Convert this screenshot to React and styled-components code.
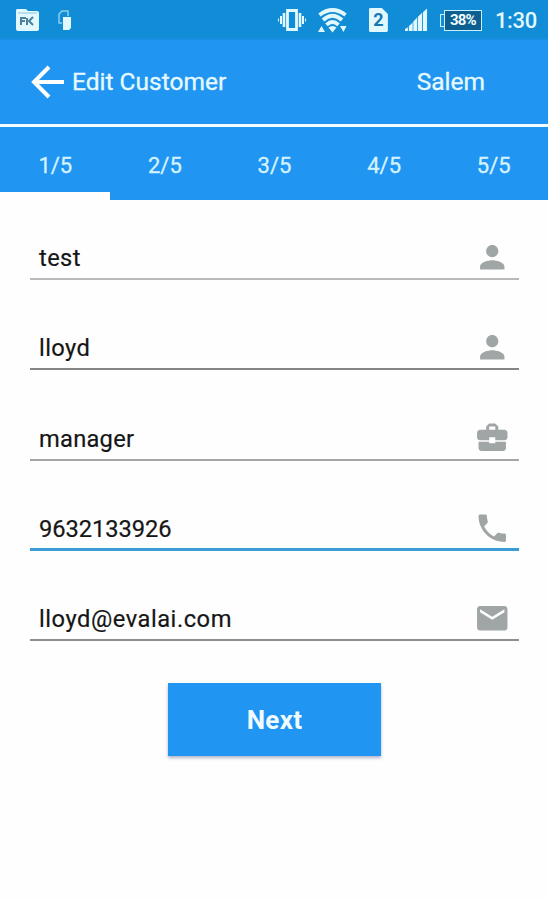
import React from 'react';
import styled, { createGlobalStyle } from 'styled-components';
import { MdPerson, MdBusinessCenter, MdPhone, MdEmail } from 'react-icons/md';

const GlobalStyle = createGlobalStyle`
  * { box-sizing: border-box; }
  body { margin: 0; background: #fefefe; font-family: Roboto, sans-serif; }
`;

const Screen = styled.main`
  width: 548px;
  height: 900px;
  overflow: hidden;
  background: #fefefe;
`;

const StatusBar = styled.div`
  display: flex;
  align-items: center;
  height: 40px;
  padding: 0 11px 0 16px;
  background: linear-gradient(#118cd6 0 37px, #1c91e8 40px);
  color: #e2f8ff;
`;

const StatusGroup = styled.div`
  display: flex;
  align-items: center;
  height: 40px;
`;

const StatusIcon = styled.svg`
  display: block;
  flex: none;
  margin-left: ${(p) => p.$gap || 0}px;
  fill: currentColor;
`;

const SimBadge = styled.span`
  display: flex;
  align-items: center;
  justify-content: center;
  width: 19px;
  height: 24px;
  margin-left: 22px;
  background: #e2f8ff;
  clip-path: polygon(0 1px, 1px 0, 13px 0, 19px 6px, 19px 23px, 18px 24px, 1px 24px, 0 23px);
  color: #1577b4;
  font-size: 18px;
  font-weight: 700;
  line-height: 24px;
`;

const BatteryCap = styled.span`
  width: 4px;
  height: 13px;
  margin-left: 12px;
  border: 1.5px solid #c8f0fa;
  border-right: 0;
`;

const Battery = styled.span`
  width: 38px;
  height: 21px;
  border: 1.5px solid #c8f0fa;
  background: #0e5f91;
  color: #f0fcff;
  font-size: 15px;
  font-weight: 700;
  letter-spacing: -0.8px;
  line-height: 19px;
  text-align: center;
`;

const Clock = styled.span`
  margin-left: 13px;
  font-size: 22px;
  font-weight: 500;
  line-height: 40px;
  padding-top: 1px;
  letter-spacing: -0.3px;
`;

const Spacer = styled.div`
  flex: 1;
`;

const Header = styled.header`
  display: flex;
  align-items: center;
  height: 87px;
  padding: 0 63px 0 31px;
  border-bottom: 3px solid #f4fcff;
  background: #2095f2;
  color: #e6faff;
  -webkit-text-stroke: 0.3px currentColor;
`;

const Title = styled.h1`
  margin: 0 0 0 7px;
  font-size: 24.5px;
  font-weight: 400;
  line-height: 30px;
`;

const City = styled.span`
  font-size: 24.5px;
  line-height: 30px;
`;

const Tabs = styled.nav`
  display: grid;
  grid-template-columns: repeat(5, 1fr);
  height: 73px;
  background: #2095f2;
`;

const Tab = styled.button`
  height: 73px;
  padding: 12px 0 0 1px;
  border: 0;
  border-bottom: 8px solid ${(p) => (p.$active ? '#fefefe' : 'transparent')};
  background: none;
  color: #d5f3ff;
  font: 400 22px/53px Roboto, sans-serif;
  -webkit-text-stroke: 0.3px currentColor;
`;

const Form = styled.form`
  display: flex;
  flex-direction: column;
  padding: 34px 29px 0 30px;
`;

const Field = styled.label`
  display: flex;
  align-items: center;
  height: 46px;
  margin-bottom: 44.3px;
  padding: ${(p) => (p.$weight ? 4 : 2)}px 9px 0 9px;
  border-bottom: ${(p) => p.$weight || 2}px solid ${(p) => p.$line};
  color: #a0a5a5;

  &:last-of-type { margin-bottom: 41.5px; }
  svg { flex: none; }
`;

const Value = styled.span`
  flex: 1;
  color: #161616;
  font-size: 23.7px;
  line-height: 30px;
  letter-spacing: ${(p) => p.$tracking || 0}px;
  padding-top: 2px;
  -webkit-text-stroke: 0.2px currentColor;
`;

const NextButton = styled.button`
  align-self: center;
  width: 213px;
  height: 73px;
  border: 0;
  background: #2095f2;
  box-shadow: 0 2px 3px rgba(60, 70, 120, 0.4);
  color: #f0fcff;
  font: 700 26px/73px Roboto, sans-serif;
  letter-spacing: 0.3px;
`;

const steps = ['1/5', '2/5', '3/5', '4/5', '5/5'];

const fields = [
  { value: 'test', icon: MdPerson, line: '#b9b9b9', tracking: 0.4 },
  { value: 'lloyd', icon: MdPerson, line: '#858585', tracking: 0.4 },
  { value: 'manager', icon: MdBusinessCenter, line: '#a5a5a5', tracking: 0.25 },
  { value: '9632133926', icon: MdPhone, line: '#3a9bd5', weight: 3, tracking: -0.05 },
  { value: 'lloyd@evalai.com', icon: MdEmail, line: '#8e8e8e', tracking: 0.53 },
];

const FolderIcon = () => (
  <StatusIcon width="23" height="22" viewBox="0 0 23 22">
    <path d="M1 0h9l2 2h9q2 0 2 2v16q0 2-2 2H2q-2 0-2-2V2q0-2 1-2z" />
    <path d="M5 16V9h5M5 12h4M11 9v7M17 8l-4 4 4 4" fill="none" stroke="#4d8099" strokeWidth="2" />
    <path d="M2 4h19" stroke="#8bc9e5" />
  </StatusIcon>
);

const DevicesIcon = () => (
  <StatusIcon $gap={19} width="14" height="21" viewBox="0 0 14 21">
    <path d="M4 13H1V4L4 1h6v5" fill="none" stroke="#8acfe8" strokeWidth="1.5" />
    <path d="M5 7h8v11l-2 2H5z" />
  </StatusIcon>
);

const VibrateIcon = () => (
  <StatusIcon width="28" height="24" viewBox="0 0 28 24">
    <path d="M9.500 2.500h9v19h-9z" fill="none" stroke="currentColor" strokeWidth="2.800" />
    <path d="M6 5v14M22 5v14" stroke="currentColor" strokeWidth="2.600" />
    <path d="M3 8v8M25 8v8" stroke="currentColor" strokeWidth="2" />
    <path d="M.5 10.500v3M27.500 10.500v3" stroke="currentColor" />
  </StatusIcon>
);

const WifiIcon = () => (
  <StatusIcon $gap={12} width="29" height="26" viewBox="0 0 29 26">
    <g fill="none" stroke="currentColor" strokeWidth="3.800">
      <path d="M1.500 8Q14.500-2 27.500 8" />
      <path d="M5 13Q14.500 4.700 24 13" />
      <path d="M8.500 17.800Q14.500 12.300 20.500 17.800" />
    </g>
    <path d="M10.500 20.500q4-3 8 0l-4 5zM0 25l3.500-6L7 25zM22 19h6.500L25.500 25z" />
  </StatusIcon>
);

const SignalIcon = () => (
  <StatusIcon $gap={17} width="23" height="24" viewBox="0 0 24 24">
    <path d="M0 23.500v-2l3-2v4zM4 23.500v-5l4-4v9zM8.700 23.500v-10l4-4v14zM13.500 23.500v-15l4.300-4v19zM18.700 23.500V4L23 0v23.500z" />
  </StatusIcon>
);

const BackArrow = () => (
  <svg width="34" height="34" viewBox="0 0 34 34" fill="none" stroke="#fff" strokeWidth="4">
    <path d="M18 2L3 17l15 15M3 17h30" />
  </svg>
);

export default function App() {
  return (
    <Screen>
      <GlobalStyle />
      <StatusBar>
        <StatusGroup>
          <FolderIcon />
          <DevicesIcon />
        </StatusGroup>
        <Spacer />
        <StatusGroup>
          <VibrateIcon />
          <WifiIcon />
          <SimBadge>2</SimBadge>
          <SignalIcon />
          <BatteryCap />
          <Battery>38%</Battery>
          <Clock>1:30</Clock>
        </StatusGroup>
      </StatusBar>
      <Header>
        <BackArrow />
        <Title>Edit Customer</Title>
        <Spacer />
        <City>Salem</City>
      </Header>
      <Tabs>
        {steps.map((step, i) => (
          <Tab key={step} $active={i === 0}>{step}</Tab>
        ))}
      </Tabs>
      <Form>
        {fields.map(({ value, icon: Icon, line, weight, tracking }) => (
          <Field key={value} $line={line} $weight={weight}>
            <Value $tracking={tracking}>{value}</Value>
            <Icon size={36.5} />
          </Field>
        ))}
        <NextButton type="button">Next</NextButton>
      </Form>
    </Screen>
  );
}
